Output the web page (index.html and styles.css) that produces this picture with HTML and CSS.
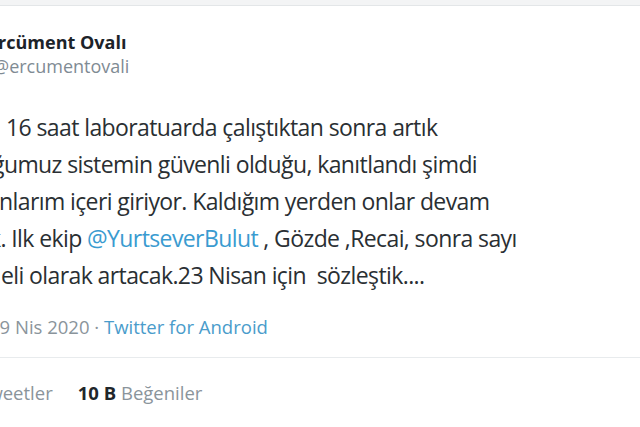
FILE: index.html
```html
<!DOCTYPE html>
<html lang="tr">
<head>
<meta charset="utf-8">
<title>Tweet</title>
<link rel="stylesheet" href="styles.css">
</head>
<body>
<div class="topbar"></div>
<div class="tweet">
  <div class="author">
    <div class="name">Ercüment Ovalı</div>
    <div class="handle">@ercumentovali</div>
  </div>
  <div class="text">
    <div class="line l1">16 saat laboratuarda çalıştıktan sonra artık</div>
    <div class="line l2">ğumuz sistemin güvenli olduğu, kanıtlandı şimdi</div>
    <div class="line l3">nlarım içeri giriyor. Kaldığım yerden onlar devam</div>
    <div class="line l4">k. Ilk ekip <span class="mention">@YurtseverBulut</span> , Gözde ,Recai, sonra sayı</div>
    <div class="line l5">eli olarak artacak.23 Nisan için&nbsp; sözleştik....</div>
  </div>
  <div class="meta">19 Nis 2020 · <span class="source">Twitter for Android</span></div>
  <div class="stats">
    <span class="stat">Retweetler</span>
    <span class="stat"><b>10 B</b> Beğeniler</span>
  </div>
</div>
</body>
</html>
```
FILE: styles.css
```css
html, body {
  margin: 0;
  padding: 0;
  background: #ffffff;
  overflow: hidden;
}
body {
  width: 640px;
  height: 427px;
  font-family: "Open Sans", "Noto Sans", sans-serif;
  color: #222a30;
}
.topbar {
  height: 5px;
  background: #f3f4f5;
  border-bottom: 1px solid #e3e6e8;
}
.tweet {
  margin-left: -10px;
  white-space: nowrap;
}
.author {
  padding-top: 25px;
}
.name {
  margin-left: -2px;
  font-weight: 700;
  font-size: 18px;
  line-height: 22px;
  color: #1c2329;
}
.handle {
  margin-left: 3px;
  font-size: 18px;
  line-height: 26px;
  color: #7f8b94;
}
.text {
  margin-top: 30px;
  font-size: 23px;
  letter-spacing: -0.6px;
  line-height: 37px;
  color: #2a2f33;
}
.l1 { padding-left: 16px; }
.l2 { padding-left: 2px; }
.l3 { padding-left: 9px; }
.l4 { margin-left: -1px; }
.l5 { padding-left: 11px; }
.mention { color: #3a9bd0; }
.meta {
  margin-top: 20px;
  margin-left: -1px;
  font-size: 18.5px;
  line-height: 26px;
  color: #8a949b;
  padding-bottom: 17px;
  border-bottom: 1px solid #e8ebed;
}
.source { color: #4a9ccb; }
.stats {
  margin-left: -30px;
  padding-top: 22px;
  font-size: 18.5px;
  line-height: 26px;
  color: #8a949b;
  display: flex;
  gap: 25px;
}
.stat b { color: #1f262b; }
```
